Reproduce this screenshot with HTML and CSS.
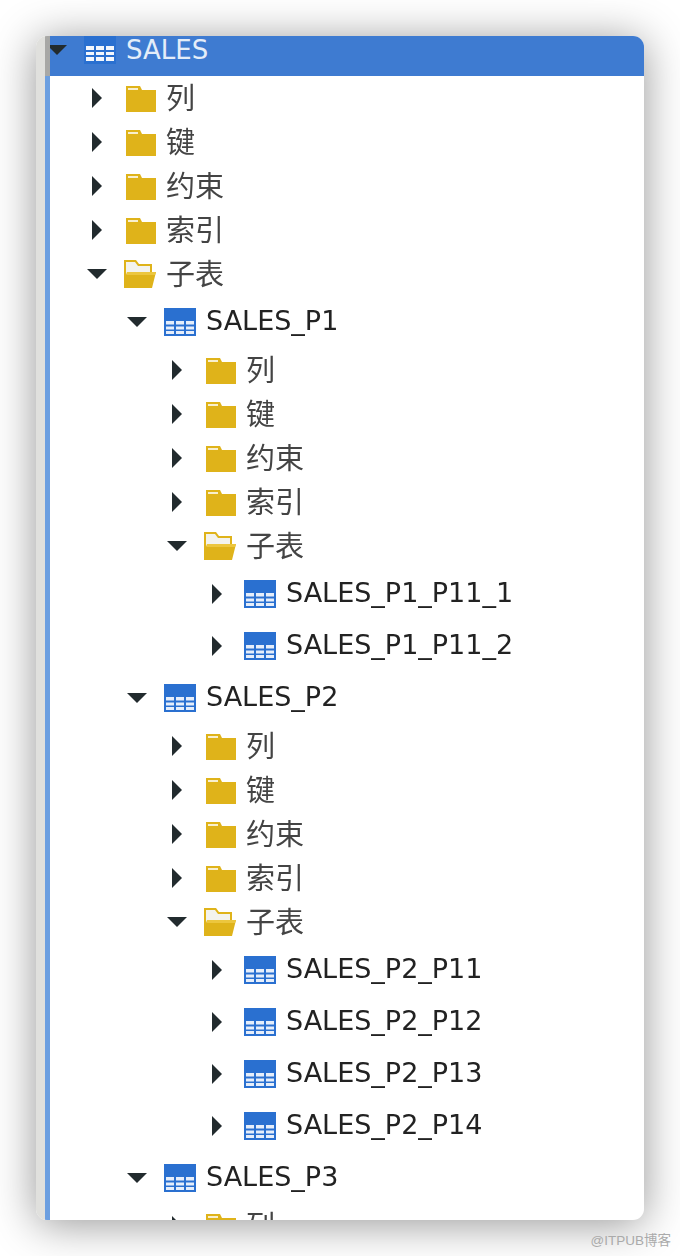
FILE: index.html
```html
<!DOCTYPE html>
<html lang="zh">
<head>
    <meta charset="UTF-8">
    <meta name="viewport" content="width=device-width, initial-scale=1.0">
    <title>SALES</title>
    <link rel="stylesheet" href="styles.css">
</head>
<body>
    <!-- shared icons -->
    <svg class="defs" width="0" height="0">
        <symbol id="arrow-right" viewBox="0 0 20 20">
            <path d="M5 0 L15 10 L5 20 Z" fill="#222b2e"/>
        </symbol>
        <symbol id="arrow-down" viewBox="0 0 20 20">
            <path d="M0 5 H20 L10 15 Z" fill="#222b2e"/>
        </symbol>
        <symbol id="folder" viewBox="0 0 32 28">
            <path d="M2 2 H16 L18 6 H32 V28 H2 Z" fill="#dfb31a"/>
            <rect x="4" y="4" width="10" height="2" fill="#f8efcf"/>
        </symbol>
        <symbol id="folder-open" viewBox="0 0 32 28">
            <path d="M0 0 H12 L15 4 H28 V12 H32 L28 28 H0 Z" fill="#dfb31a"/>
            <path d="M2 2 H11 L14 6 H26 V12 H3 L2 15 Z" fill="#f3f3ee"/>
            <path d="M3 12 H32 L31 15 H3 Z" fill="#ecc63e"/>
        </symbol>
        <symbol id="table" viewBox="0 0 32 28">
            <rect width="32" height="28" fill="#2a70d0"/>
            <path d="M2 13 H10 V16.5 H2 Z M12 13 H20 V16.5 H12 Z M22 13 H30 V16.5 H22 Z M2 18.5 H10 V21.5 H2 Z M12 18.5 H20 V21.5 H12 Z M22 18.5 H30 V21.5 H22 Z M2 23 H10 V26 H2 Z M12 23 H20 V26 H12 Z M22 23 H30 V26 H22 Z" fill="#e6eefa"/>
        </symbol>
        <symbol id="table-selected" viewBox="0 0 32 28">
            <rect width="32" height="28" fill="#2a70d0"/>
            <path d="M2 10 H10 V14 H2 Z M12 10 H20 V14 H12 Z M22 10 H30 V14 H22 Z M2 16 H10 V19 H2 Z M12 16 H20 V19 H12 Z M22 16 H30 V19 H22 Z M2 21 H10 V25 H2 Z M12 21 H20 V25 H12 Z M22 21 H30 V25 H22 Z" fill="#f4f7fc"/>
        </symbol>
    </svg>

    <div class="window">
        <div class="rail"></div>
        <div class="tree">
            <div class="row row-table row-selected">
                <svg class="arrow"><use href="#arrow-down"/></svg>
                <svg class="icon"><use href="#table-selected"/></svg>
                <span class="label">SALES</span>
            </div>
            <ul class="level">
                <li class="row"><svg class="arrow"><use href="#arrow-right"/></svg><svg class="icon"><use href="#folder"/></svg><span class="label">列</span></li>
                <li class="row"><svg class="arrow"><use href="#arrow-right"/></svg><svg class="icon"><use href="#folder"/></svg><span class="label">键</span></li>
                <li class="row"><svg class="arrow"><use href="#arrow-right"/></svg><svg class="icon"><use href="#folder"/></svg><span class="label">约束</span></li>
                <li class="row"><svg class="arrow"><use href="#arrow-right"/></svg><svg class="icon"><use href="#folder"/></svg><span class="label">索引</span></li>
                <li class="row"><svg class="arrow"><use href="#arrow-down"/></svg><svg class="icon"><use href="#folder-open"/></svg><span class="label">子表</span></li>
                <li>
                    <ul class="level">
                        <li class="row row-table"><svg class="arrow"><use href="#arrow-down"/></svg><svg class="icon"><use href="#table"/></svg><span class="label">SALES_P1</span></li>
                        <li>
                            <ul class="level">
                                <li class="row"><svg class="arrow"><use href="#arrow-right"/></svg><svg class="icon"><use href="#folder"/></svg><span class="label">列</span></li>
                                <li class="row"><svg class="arrow"><use href="#arrow-right"/></svg><svg class="icon"><use href="#folder"/></svg><span class="label">键</span></li>
                                <li class="row"><svg class="arrow"><use href="#arrow-right"/></svg><svg class="icon"><use href="#folder"/></svg><span class="label">约束</span></li>
                                <li class="row"><svg class="arrow"><use href="#arrow-right"/></svg><svg class="icon"><use href="#folder"/></svg><span class="label">索引</span></li>
                                <li class="row"><svg class="arrow"><use href="#arrow-down"/></svg><svg class="icon"><use href="#folder-open"/></svg><span class="label">子表</span></li>
                                <li>
                                    <ul class="level">
                                        <li class="row row-table"><svg class="arrow"><use href="#arrow-right"/></svg><svg class="icon"><use href="#table"/></svg><span class="label">SALES_P1_P11_1</span></li>
                                        <li class="row row-table"><svg class="arrow"><use href="#arrow-right"/></svg><svg class="icon"><use href="#table"/></svg><span class="label">SALES_P1_P11_2</span></li>
                                    </ul>
                                </li>
                            </ul>
                        </li>
                        <li class="row row-table"><svg class="arrow"><use href="#arrow-down"/></svg><svg class="icon"><use href="#table"/></svg><span class="label">SALES_P2</span></li>
                        <li>
                            <ul class="level">
                                <li class="row"><svg class="arrow"><use href="#arrow-right"/></svg><svg class="icon"><use href="#folder"/></svg><span class="label">列</span></li>
                                <li class="row"><svg class="arrow"><use href="#arrow-right"/></svg><svg class="icon"><use href="#folder"/></svg><span class="label">键</span></li>
                                <li class="row"><svg class="arrow"><use href="#arrow-right"/></svg><svg class="icon"><use href="#folder"/></svg><span class="label">约束</span></li>
                                <li class="row"><svg class="arrow"><use href="#arrow-right"/></svg><svg class="icon"><use href="#folder"/></svg><span class="label">索引</span></li>
                                <li class="row"><svg class="arrow"><use href="#arrow-down"/></svg><svg class="icon"><use href="#folder-open"/></svg><span class="label">子表</span></li>
                                <li>
                                    <ul class="level">
                                        <li class="row row-table"><svg class="arrow"><use href="#arrow-right"/></svg><svg class="icon"><use href="#table"/></svg><span class="label">SALES_P2_P11</span></li>
                                        <li class="row row-table"><svg class="arrow"><use href="#arrow-right"/></svg><svg class="icon"><use href="#table"/></svg><span class="label">SALES_P2_P12</span></li>
                                        <li class="row row-table"><svg class="arrow"><use href="#arrow-right"/></svg><svg class="icon"><use href="#table"/></svg><span class="label">SALES_P2_P13</span></li>
                                        <li class="row row-table"><svg class="arrow"><use href="#arrow-right"/></svg><svg class="icon"><use href="#table"/></svg><span class="label">SALES_P2_P14</span></li>
                                    </ul>
                                </li>
                            </ul>
                        </li>
                        <li class="row row-table"><svg class="arrow"><use href="#arrow-down"/></svg><svg class="icon"><use href="#table"/></svg><span class="label">SALES_P3</span></li>
                        <li>
                            <ul class="level">
                                <li class="row"><svg class="arrow"><use href="#arrow-right"/></svg><svg class="icon"><use href="#folder"/></svg><span class="label">列</span></li>
                            </ul>
                        </li>
                    </ul>
                </li>
            </ul>
        </div>
    </div>

    <div class="watermark">@ITPUB博客</div>
</body>
</html>
```

FILE: styles.css
```css
body {
    margin: 0;
    padding: 36px;
    width: 680px;
    height: 1256px;
    box-sizing: border-box;
    overflow: hidden;
    position: relative;
    background: #ffffff;
    font-family: "Noto Sans CJK SC", "Noto Sans", sans-serif;
}

.defs {
    display: block;
}

.window {
    display: flex;
    width: 608px;
    height: 1184px;
    overflow: hidden;
    background: #ffffff;
    border-radius: 11px;
    box-shadow: 0 4px 44px rgba(0, 0, 0, 0.42);
}

.rail {
    width: 9px;
    flex-shrink: 0;
    background: #e0e0dd;
}

.tree {
    flex: 1;
    margin-top: -12px;
    border-left: 5px solid #6c9fe0;
    filter: blur(0.35px);
}

.level {
    list-style: none;
    margin: 0;
    padding: 0 0 0 40px;
}

.row {
    display: flex;
    align-items: center;
    height: 44px;
    color: #444444;
    white-space: nowrap;
}

.row-table {
    height: 52px;
    color: #222222;
}

.row-selected {
    margin-left: -5px;
    border-left: 5px solid #a8a8a6;
    background: #3e7bd1;
    color: #e4edf9;
    overflow: hidden;
}

.arrow {
    width: 20px;
    height: 20px;
    flex-shrink: 0;
    margin-left: -3px;
    margin-right: 17px;
}

.icon {
    width: 32px;
    height: 28px;
    flex-shrink: 0;
    margin-right: 10px;
}

.label {
    font-size: 29px;
    line-height: 44px;
    margin-top: -4px;
}

.row-table .label {
    font-family: "DejaVu Sans", sans-serif;
    font-size: 27px;
    margin-top: -2px;
}

.row-selected .label {
    font-size: 26px;
    margin-top: 0;
}

.watermark {
    position: absolute;
    right: 9px;
    bottom: 7px;
    font-family: "Liberation Sans", "Noto Sans CJK SC", sans-serif;
    font-size: 13.5px;
    color: #aaaaaa;
}
```
